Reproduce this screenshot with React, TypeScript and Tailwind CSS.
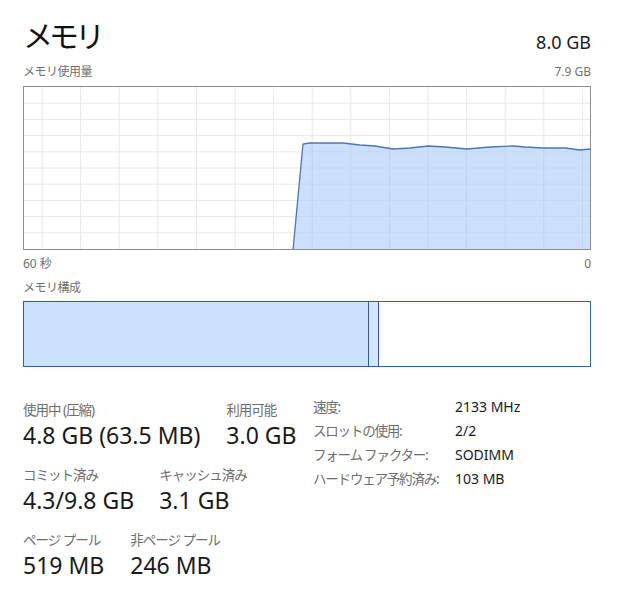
import React from "react";

const FONT = { fontFamily: '"Noto Sans", "Noto Sans CJK JP", sans-serif' };

// usage line, coords inside the graph border (566 x 162)
const usage: [number, number][] = [
  [269, 163], [279, 57], [286, 56], [319, 56], [336, 58], [351, 59], [369, 62],
  [386, 61], [404, 59], [421, 60], [443, 62], [466, 60], [489, 59], [501, 60],
  [519, 61], [541, 61], [556, 63], [566, 62],
];

const UsageGraph: React.FC = () => {
  const vLines = Array.from({ length: 15 }, (_, i) => 18 + i * 38.6);
  const hLines = Array.from({ length: 9 }, (_, i) => (i + 1) * 16.2);
  const line = usage.map(([x, y]) => `${x},${y}`).join(" ");
  return (
    <div className="w-[568px] h-[164px] border border-[#8c8c8c] bg-white">
      <svg width="566" height="162" viewBox="0 0 566 162" className="block">
        {vLines.map((x) => (
          <line key={"v" + x} x1={x} y1={0} x2={x} y2={162} stroke="#e8e8e8" strokeWidth="1" />
        ))}
        {hLines.map((y) => (
          <line key={"h" + y} x1={0} y1={y} x2={566} y2={y} stroke="#e8e8e8" strokeWidth="1" />
        ))}
        <polygon points={`${line} 566,163`} fill="#cce0fb" />
        <clipPath id="fill">
          <polygon points={`${line} 566,163`} />
        </clipPath>
        <g clipPath="url(#fill)">
          {vLines.map((x) => (
            <line key={"fv" + x} x1={x} y1={0} x2={x} y2={162} stroke="#bdd3ef" strokeWidth="1" />
          ))}
          {hLines.map((y) => (
            <line key={"fh" + y} x1={0} y1={y} x2={566} y2={y} stroke="#c3d8f3" strokeWidth="1" />
          ))}
        </g>
        <polyline points={line} fill="none" stroke="#4a76b4" strokeWidth="1.3" />
      </svg>
    </div>
  );
};

const Stat: React.FC<{ label: string; value: string }> = ({ label, value }) => (
  <div className="flex flex-col">
    <span className="text-[13.5px] leading-[20px] text-[#6e6e6e] tracking-[-1px] whitespace-pre">{label}</span>
    <span className="text-[23px] leading-[30px] text-[#1a1a1a]">{value}</span>
  </div>
);

const details: [string, string][] = [
  ["速度:", "2133 MHz"],
  ["スロットの使用:", "2/2"],
  ["フォーム ファクター:", "SODIMM"],
  ["ハードウェア予約済み:", "103 MB"],
];

export default function App() {
  return (
    <div className="w-[617px] h-[597px] bg-white pl-[23px] pt-[16px]" style={FONT}>
      <div className="w-[568px] flex justify-between items-baseline">
        <h1 className="text-[30px] leading-[40px] text-[#111] tracking-[-4px]">メモリ</h1>
        <span className="text-[18px] text-[#1a1a1a] relative top-[2px]">8.0 GB</span>
      </div>
      <div className="w-[568px] flex justify-between text-[12px] leading-[16px] text-[#707070] mt-[8px] mb-[6px]">
        <span className="tracking-[-0.5px]">メモリ使用量</span>
        <span>7.9 GB</span>
      </div>
      <UsageGraph />
      <div className="w-[568px] flex justify-between text-[12px] leading-[16px] text-[#707070] mt-[6px]">
        <span>60 秒</span>
        <span>0</span>
      </div>
      <div className="text-[12px] leading-[16px] text-[#707070] mt-[8px] mb-[5px] tracking-[-0.5px]">メモリ構成</div>
      <div className="w-[568px] h-[66px] border border-[#2f5f9e] flex">
        <div className="w-[345px] bg-[#cce0fb] border-r border-[#2f5f9e]" />
        <div className="w-[10px] bg-[#d6e5f9] border-r border-[#2f5f9e]" />
        <div className="flex-1 bg-white" />
      </div>
      <div className="flex mt-[33px]">
        <div className="w-[290px] flex flex-col gap-[15px]">
          <div className="flex gap-[26px]">
            <Stat label={"使用中 (圧縮)"} value="4.8 GB (63.5 MB)" />
            <Stat label="利用可能" value="3.0 GB" />
          </div>
          <div className="flex gap-[25px]">
            <Stat label="コミット済み" value="4.3/9.8 GB" />
            <Stat label="キャッシュ済み" value="3.1 GB" />
          </div>
          <div className="flex gap-[26px]">
            <Stat label="ページ プール" value="519 MB" />
            <Stat label="非ページ プール" value="246 MB" />
          </div>
        </div>
        <div className="grid grid-cols-[142px_auto] auto-rows-[24px] text-[14px] leading-[24px] -mt-[5px]">
          {details.map(([k, v]) => (
            <React.Fragment key={k}>
              <span className="text-[#6e6e6e] whitespace-nowrap text-[13.5px] tracking-[-1.2px]">{k}</span>
              <span className="text-[#1a1a1a]">{v}</span>
            </React.Fragment>
          ))}
        </div>
      </div>
    </div>
  );
}
